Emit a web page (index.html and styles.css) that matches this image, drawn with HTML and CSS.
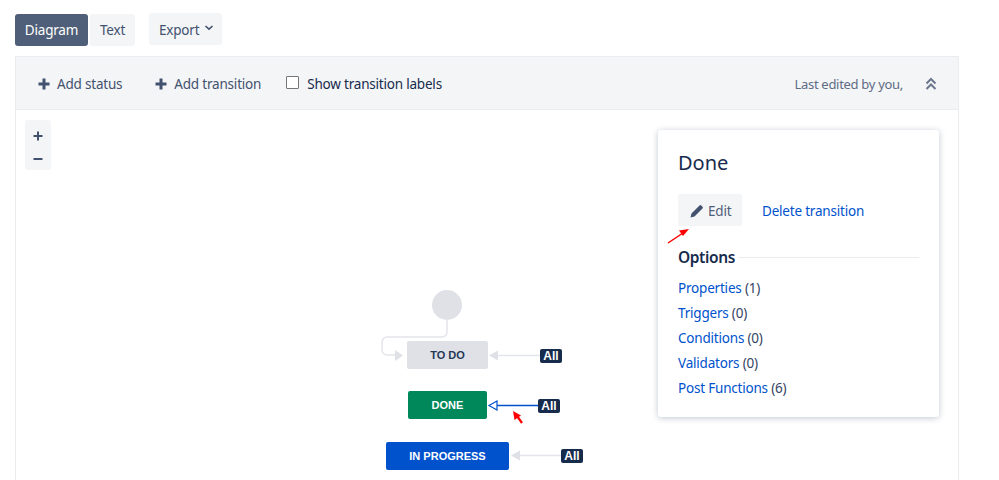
FILE: index.html
```html
<!DOCTYPE html>
<html lang="en">
<head>
  <meta charset="UTF-8">
  <meta name="viewport" content="width=device-width, initial-scale=1.0">
  <title>Workflow diagram</title>
  <link rel="stylesheet" href="styles.css">
</head>
<body>
  <div class="tabs">
    <button class="tab active">Diagram</button>
    <button class="tab text">Text</button>
    <button class="tab export">Export
      <svg class="caret" width="10" height="10" viewBox="0 0 10 10"><path d="M1.500 3 L5 6.200 L8.500 3" fill="none" stroke="#42526e" stroke-width="1.600"/></svg>
    </button>
  </div>

  <div class="workflow">
    <div class="toolbar">
      <span class="tool">
        <svg width="12" height="12" viewBox="0 0 12 12"><path d="M6 0.500v11M0.500 6h11" stroke="#42526e" stroke-width="3"/></svg>
        Add status
      </span>
      <span class="tool">
        <svg width="12" height="12" viewBox="0 0 12 12"><path d="M6 0.500v11M0.500 6h11" stroke="#42526e" stroke-width="3"/></svg>
        Add transition
      </span>
      <label class="labels-toggle"><span class="checkbox"></span>Show transition labels</label>
      <span class="last-edited">Last edited by you,</span>
      <svg class="collapse" width="12" height="14" viewBox="0 0 12 14"><path d="M1.500 6.500 L6 2 L10.500 6.500 M1.500 12 L6 7.500 L10.500 12" fill="none" stroke="#6b778c" stroke-width="2"/></svg>
    </div>

    <div class="canvas">
      <div class="zoom-controls">
        <svg width="10" height="10" viewBox="0 0 10 10"><path d="M5 0.500v9M0.500 5h9" stroke="#42526e" stroke-width="2"/></svg>
        <svg width="10" height="10" viewBox="0 0 10 10"><path d="M0.500 5h9" stroke="#42526e" stroke-width="2"/></svg>
      </div>

      <!-- connectors, coordinates start at the top left of the canvas -->
      <svg class="connectors" width="700" height="370" viewBox="0 0 700 370">
        <circle cx="431" cy="195" r="15" fill="#dfe1e6"/>
        <path d="M431 210v12a5 5 0 0 1-5 5H371a5 5 0 0 0-5 5v8a5 5 0 0 0 5 5h9" fill="none" stroke="#e3e5ea" stroke-width="1.500"/>
        <path d="M379 240l8 5.500-8 5.500z" fill="#dfe1e6"/>
        <path d="M524 245.500H482" stroke="#e3e5ea" stroke-width="1.500"/>
        <path d="M482 240.500l-9 5 9 5z" fill="#dfe1e6"/>
        <path d="M522 295.500H481" stroke="#0052cc" stroke-width="1.300"/>
        <path d="M481 291l-8 4.500 8 4.500z" fill="#fff" stroke="#0052cc" stroke-width="1.200"/>
        <path d="M545 345.500H504" stroke="#e3e5ea" stroke-width="1.500"/>
        <path d="M504 340.500l-9 5 9 5z" fill="#dfe1e6"/>
        <!-- red annotation arrows -->
        <path d="M652 133L667 123" stroke="#f00" stroke-width="1.500"/>
        <path d="M673 119l-10 1.500 4 5.500z" fill="#f00"/>
        <path d="M506 313L501 306" stroke="#f00" stroke-width="2.200"/>
        <path d="M497 301l1.500 9 6.500-4.500z" fill="#f00"/>
      </svg>

      <div class="node todo">TO DO</div>
      <div class="node done">DONE</div>
      <div class="node progress">IN PROGRESS</div>
      <div class="badge badge-todo">All</div>
      <div class="badge badge-done">All</div>
      <div class="badge badge-progress">All</div>

      <div class="details">
        <h2>Done</h2>
        <div class="actions">
          <button class="edit">
            <svg width="14" height="14" viewBox="0 0 14 14"><path d="M0.500 13.500l1-4L9.500 1.500a1.200 1.200 0 0 1 1.700 0l1.300 1.300a1.200 1.200 0 0 1 0 1.700L4.500 12.500z" fill="#42526e"/></svg>
            Edit
          </button>
          <a class="delete" href="#">Delete transition</a>
        </div>
        <div class="options-head"><h3>Options</h3><span class="rule"></span></div>
        <ul class="options">
          <li><a href="#">Properties</a> (1)</li>
          <li><a href="#">Triggers</a> (0)</li>
          <li><a href="#">Conditions</a> (0)</li>
          <li><a href="#">Validators</a> (0)</li>
          <li><a href="#">Post Functions</a> (6)</li>
        </ul>
      </div>
    </div>
  </div>
</body>
</html>
```

FILE: styles.css
```css
html, body {
  height: 100%;
}

body {
  margin: 0;
  padding: 13px 40px 0 15px;
  box-sizing: border-box;
  font-family: "Noto Sans", "Open Sans", sans-serif;
  font-size: 13.5px;
  letter-spacing: -0.2px;
  color: #172b4d;
  background: #fff;
  overflow: hidden;
}

/* Tabs */
.tabs {
  display: flex;
  align-items: flex-start;
  height: 33px;
}

.tab {
  height: 32px;
  margin-top: 1px;
  padding: 0;
  border: none;
  border-radius: 3px;
  background: #f4f5f7;
  color: #42526e;
  font: inherit;
  letter-spacing: inherit;
}

.tab.active {
  width: 73px;
  margin-right: 2px;
  background: #505f79;
  color: #fff;
}

.tab.text {
  width: 45px;
}

.tab.export {
  display: flex;
  align-items: center;
  gap: 5px;
  width: 73px;
  margin-top: 0;
  margin-left: 14px;
  padding: 1px 0 0 10px;
}

.caret {
  margin-top: -4px;
}

/* Workflow box */
.workflow {
  margin-top: 10px;
  height: 424px;
  display: flex;
  flex-direction: column;
  border: 1px solid #ebecf0;
  border-bottom: none;
}

.toolbar {
  display: flex;
  align-items: center;
  box-sizing: border-box;
  height: 53px;
  padding: 2px 21px 0 22px;
  background: #f4f5f7;
  border-bottom: 1px solid #ebecf0;
  flex-shrink: 0;
}

.tool {
  display: flex;
  align-items: center;
  gap: 7px;
  margin-right: 33px;
  color: #42526e;
}

.labels-toggle {
  display: flex;
  align-items: center;
  margin-left: -8px;
  color: #172b4d;
}

.checkbox {
  box-sizing: border-box;
  width: 13px;
  height: 13px;
  margin: -3px 8px 0 0;
  border: 1px solid #767676;
  border-radius: 1px;
  background: #fff;
}

.last-edited {
  margin-left: auto;
  margin-right: 22px;
  font-size: 13px;
  letter-spacing: -0.3px;
  color: #5e6c84;
}

/* Diagram */
.canvas {
  position: relative;
  flex: 1;
}

.zoom-controls {
  position: absolute;
  left: 9px;
  top: 10px;
  width: 26px;
  height: 50px;
  padding-top: 11px;
  box-sizing: border-box;
  display: flex;
  flex-direction: column;
  align-items: center;
  gap: 13px;
  border-radius: 3px;
  background: #f4f5f7;
}

.connectors {
  position: absolute;
  left: 0;
  top: 0;
  pointer-events: none;
  z-index: 2;
}

.node {
  position: absolute;
  display: flex;
  align-items: center;
  justify-content: center;
  height: 28px;
  border-radius: 2px;
  font-family: "Liberation Sans", Arial, sans-serif;
  font-size: 11px;
  font-weight: bold;
  letter-spacing: 0;
  color: #fff;
}

.todo {
  left: 391px;
  top: 231px;
  width: 81px;
  background: #dfe1e6;
  color: #253858;
}

.done {
  left: 392px;
  top: 281px;
  width: 79px;
  background: #00875a;
}

.progress {
  left: 370px;
  top: 332px;
  width: 123px;
  background: #0052cc;
}

.badge {
  position: absolute;
  display: flex;
  align-items: center;
  justify-content: center;
  width: 22px;
  height: 14px;
  border-radius: 2px;
  background: #172b4d;
  color: #fff;
  font-family: "Liberation Sans", Arial, sans-serif;
  font-size: 12px;
  font-weight: bold;
  letter-spacing: 0;
}

.badge-todo { left: 524px; top: 239px; }
.badge-done { left: 522px; top: 289px; }
.badge-progress { left: 545px; top: 339px; }

/* Transition details panel */
.details {
  position: absolute;
  left: 642px;
  top: 20px;
  width: 241px;
  height: 248px;
  padding: 19px 20px 20px 20px;
  border-radius: 3px;
  background: #fff;
  box-shadow: 0 1px 6px rgba(9, 30, 66, 0.25);
}

.details h2 {
  margin: 0;
  font-size: 20px;
  font-weight: 400;
  letter-spacing: 0;
  line-height: 27px;
}

.actions {
  display: flex;
  align-items: center;
  gap: 20px;
  margin-top: 18px;
}

.actions a, .options a {
  color: #0052cc;
  text-decoration: none;
}

.delete {
  padding-top: 2px;
}

.edit {
  display: flex;
  align-items: center;
  gap: 4px;
  width: 64px;
  height: 32px;
  padding: 1px 0 0 12px;
  border: none;
  border-radius: 3px;
  background: #f4f5f7;
  color: #505f79;
  font: inherit;
  letter-spacing: inherit;
}

.options-head {
  display: flex;
  align-items: center;
  gap: 3px;
  margin-top: 20px;
}

.options-head h3 {
  margin: 0;
  font-size: 15.5px;
  font-weight: 600;
  letter-spacing: -0.4px;
  line-height: 22px;
}

.rule {
  flex: 1;
  height: 1px;
  background: #ebecf0;
}

.options {
  list-style: none;
  margin: 8px 0 0;
  padding: 0;
  color: #344563;
}

.options li {
  height: 25px;
  line-height: 25px;
}
```
